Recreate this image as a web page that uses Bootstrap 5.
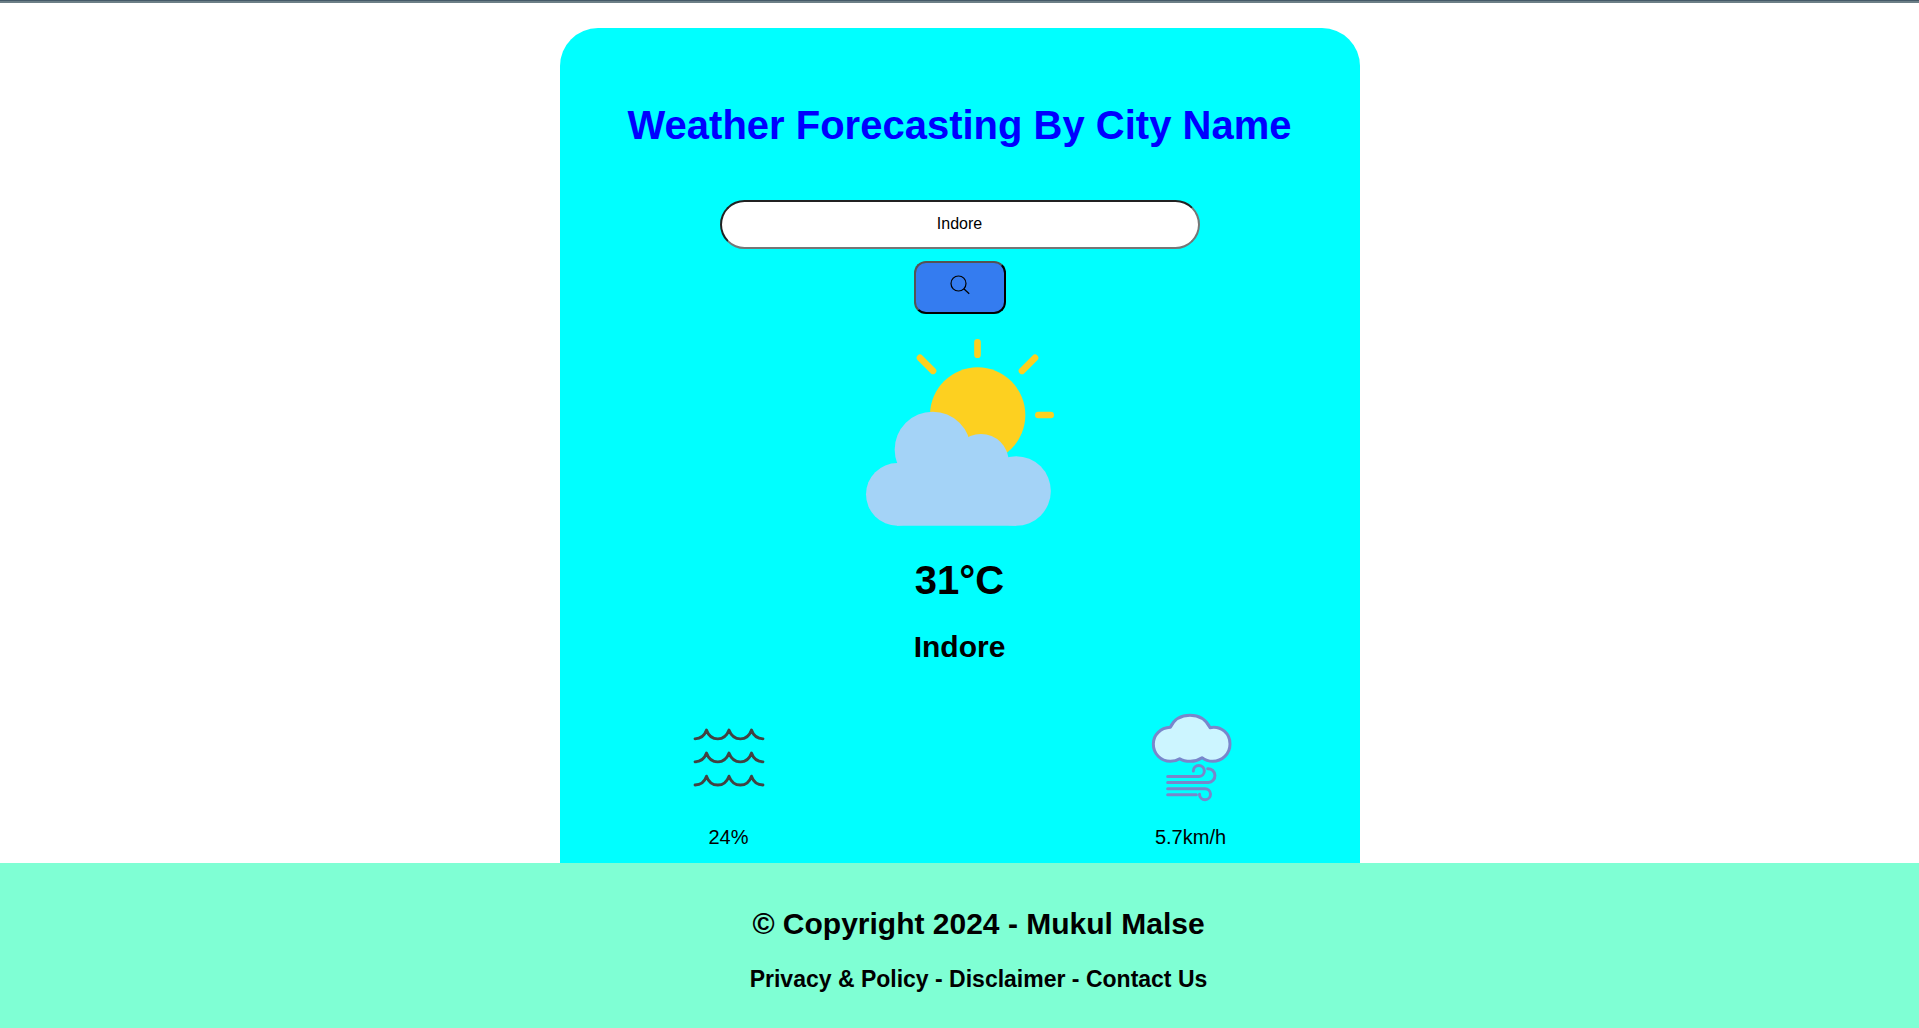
<!DOCTYPE html>
<html lang="en">
<head>
<meta charset="utf-8">
<meta name="viewport" content="width=device-width, initial-scale=1">
<title>Weather Forecasting By City Name</title>
<link rel="stylesheet" href="https://cdn.jsdelivr.net/npm/bootstrap@5.3.0/dist/css/bootstrap.min.css">
<style>
  body { font-family: "Liberation Sans", Arial, sans-serif; color: #000; line-height: normal; border-top: 1px solid #455a68; }
  .top-rule { height: 2px; background: #6c7f87; }
  .weather-panel { width: 100%; max-width: 800px; margin-top: 25px; padding-top: 74px; padding-bottom: 14px; background: #00ffff; border-radius: 38px 38px 0 0; }
  .page-title, .temperature { font-size: 40px; line-height: 46px; font-weight: 700; }
  .page-title { color: #0000ff; margin-bottom: 52px; }
  .city-name, .copyright { font-size: 30px; line-height: 34px; font-weight: 700; }
  .search-form { gap: 12px; }
  .city-input { width: 60%; height: 49px; font-size: 16px; color: #000; background: #fff; border: 2px inset #767676; border-radius: 25px; padding: 0 16px 2px; }
  .search-btn { width: 92px; height: 53px; background: #347cf0; border: 2px outset #000; border-radius: 12px; padding: 0 0 6px; }
  .condition-icon { width: 200px; height: 200px; margin: 18px 0 25px; }
  .city-name { margin: 27px 0 44px; }
  .metrics { padding: 0 120px; }
  .metric { width: 98px; font-size: 20px; line-height: 23px; gap: 20px; }
  .metric svg { width: 98px; height: 98px; }
  .site-footer { background: #7fffd4; padding: 44px 0 37px 38px; }
  .footer-links { font-size: 23px; line-height: 26px; font-weight: 700; margin-top: 25px; }
  .footer-links a { color: #000; text-decoration: none; }
  @media (max-width: 640px) {
    .metrics { padding: 0 24px; }
    .city-input { width: 85%; }
    .site-footer { padding-left: 0; }
  }
</style>
<script src="https://cdn.jsdelivr.net/npm/bootstrap@5.3.0/dist/js/bootstrap.bundle.min.js"></script>
</head>
<body class="d-flex flex-column min-vh-100 bg-white">
<div class="top-rule"></div>
<main class="weather-panel mx-auto flex-grow-1 d-flex flex-column align-items-center text-center">
  <h1 class="page-title" id="title">Weather Forecasting By City Name</h1>
  <form class="search-form w-100 d-flex flex-column align-items-center">
    <input class="city-input text-center" type="text" value="Indore" aria-label="City name">
    <button class="search-btn d-flex align-items-center justify-content-center" type="button" aria-label="Search">
      <svg width="20" height="20" viewBox="0 0 20 20" fill="none" stroke="#000" stroke-width="1.200"><circle cx="8.5" cy="8.5" r="7.5"/><path d="M13.8 13.8L19.2 18.8"/></svg>
    </button>
  </form>
  <svg class="condition-icon" viewBox="30 36 600 600" aria-hidden="true">
    <g stroke="#fdd020" stroke-width="20" stroke-linecap="round">
      <path d="M382.500 67V104M210 113.500L249 152.500M555 113.500L516 152.500M565 285H602"/>
    </g>
    <circle cx="383" cy="285" r="143" fill="#fdd020"/>
    <g fill="#a4d3f7">
      <circle cx="248" cy="389" r="114"/>
      <circle cx="393" cy="425" r="83"/>
      <circle cx="142" cy="523" r="94"/>
      <circle cx="498" cy="513" r="104.500"/>
      <path d="M141 429H498V617.500H141Z"/>
    </g>
  </svg>
  <div class="temperature">31°C</div>
  <h2 class="city-name">Indore</h2>
  <div class="metrics w-100 d-flex justify-content-between">
    <div class="metric d-flex flex-column align-items-center">
      <svg viewBox="30 24 294 294" fill="none" stroke="#424242" stroke-width="8.500" stroke-linecap="round" stroke-linejoin="round" aria-hidden="true">
        <path id="wave" d="M75 116.500C92 116 104 106 109.500 90C115 106 127 116.500 143.500 116.500S171 106 177 90C183 106 194 116.500 211 116.500S239 106 244.500 90C250 106 262 116 279 116.500"/>
        <use href="#wave" y="69"/>
        <use href="#wave" y="138.500"/>
      </svg>
      <span>24%</span>
    </div>
    <div class="metric d-flex flex-column align-items-center">
      <svg viewBox="36 24 294 294" fill="none" stroke="#7986cb" stroke-width="9" stroke-linecap="round" stroke-linejoin="round" aria-hidden="true">
        <path fill="#ccf5ff" d="M121 82C132 59 153 46 180 46S228 59 240 83C275 77 300 101 300 132C300 162 276 184 248 184C235 184 225 180 216 173C204 181 193 184 181 184S158 182 149 176C140 182 132 184 121 184C92 184 70 161 70 132S92 84 121 82Z"/>
        <path d="M113 229.500H207A16.500 16.500 0 1 0 190 213M113 247.500H235A20.500 20.500 0 0 0 233 206M113 266H225A16.500 16.500 0 1 1 208.500 283M113 284.500H199"/>
      </svg>
      <span>5.7km/h</span>
    </div>
  </div>
</main>
<footer class="site-footer text-center">
  <div class="copyright">© Copyright 2024 - Mukul Malse</div>
  <div class="footer-links"><a href="#">Privacy &amp; Policy</a> - <a href="#">Disclaimer</a> - <a href="#">Contact Us</a></div>
</footer>
</body>
</html>
